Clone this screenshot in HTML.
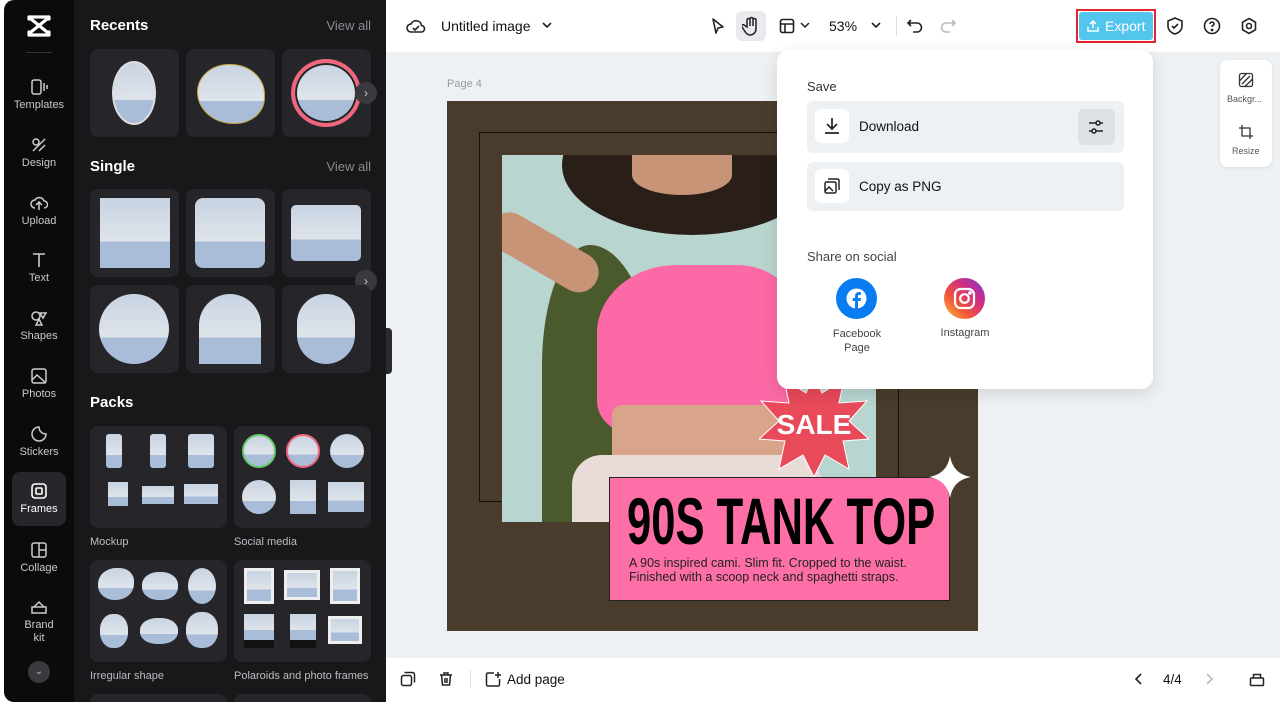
<!DOCTYPE html>
<html><head><meta charset="utf-8"><style>
*{box-sizing:border-box;margin:0;padding:0}
body{width:1280px;height:706px;overflow:hidden;background:#fff;font-family:"Liberation Sans",sans-serif;position:relative}
.abs{position:absolute}
.side{left:4px;top:0;width:70px;height:702px;background:#0b0b0c;border-radius:10px 0 0 10px}
.nav{position:absolute;left:0;width:70px;text-align:center;color:#c9c9cc;font-size:11px}
.nav svg{display:block;margin:0 auto 3px}
.panel{left:74px;top:0;width:312px;height:702px;background:#18181a;overflow:hidden}
.h{position:absolute;color:#fff;font-weight:bold;font-size:15px}
.va{position:absolute;right:15px;color:#8c8c90;font-size:13px}
.card{position:absolute;background:#26262a;border-radius:8px;overflow:hidden}
.sky{position:absolute;background:linear-gradient(#c8d3e2 0,#dfe4ea 62%,#a9bcd8 62%);}
.lbl{position:absolute;color:#bdbdc1;font-size:11px}
.arrow{position:absolute;width:22px;height:22px;border-radius:50%;background:#3a3a3e;color:#ccc;font-size:12px;text-align:center;line-height:22px}
.top{left:386px;top:0;width:894px;height:52px;background:#fff}
.canvas{left:386px;top:52px;width:894px;height:606px;background:#eef1f4}
.bottom{left:386px;top:658px;width:894px;height:44px;background:#fff}
.pop{left:777px;top:50px;width:376px;height:339px;background:#fff;border-radius:12px;box-shadow:0 4px 16px rgba(0,0,0,.12)}
.row{position:absolute;left:30px;width:317px;background:#eef1f4;border-radius:6px}
.ic{position:absolute;left:8px;top:8px;width:34px;height:34px;background:#fff;border-radius:6px}
</style></head><body>
<div class="abs side">
 <svg class="abs" style="left:22px;top:14px" width="26" height="24" viewBox="0 0 26 24" fill="none" stroke="#fff" stroke-width="3.2" stroke-linecap="round" stroke-linejoin="round"><path d="M3 3h20M3 21h20M5 5l16 13M21 5L5 18M3 3v2M3 21v-3M23 3v2M23 21v-3"/></svg>
 <div class="abs" style="left:22px;top:52px;width:26px;height:1px;background:#333"></div>
 <div class="nav" style="top:78px"><svg width="18" height="18" viewBox="0 0 18 18" fill="none" stroke="#ccc" stroke-width="1.5"><rect x="2" y="2" width="9" height="14" rx="2"/><path d="M14 5v8M17 7v4"/></svg>Templates</div>
 <div class="nav" style="top:136px"><svg width="18" height="18" viewBox="0 0 18 18" fill="none" stroke="#ccc" stroke-width="1.5"><circle cx="6" cy="6" r="3"/><path d="M3 15l12-12M9 15l6-6"/></svg>Design</div>
 <div class="nav" style="top:194px"><svg width="18" height="18" viewBox="0 0 18 18" fill="none" stroke="#ccc" stroke-width="1.5"><path d="M5 14a4 4 0 010-8 5 5 0 019 1 3.5 3.5 0 010 7M9 16V9M6 11l3-3 3 3"/></svg>Upload</div>
 <div class="nav" style="top:251px"><svg width="18" height="18" viewBox="0 0 18 18" fill="none" stroke="#ccc" stroke-width="1.6"><path d="M3 3h12M9 3v13"/></svg>Text</div>
 <div class="nav" style="top:309px"><svg width="18" height="18" viewBox="0 0 18 18" fill="none" stroke="#ccc" stroke-width="1.5"><circle cx="6" cy="7" r="4"/><path d="M10 4l6 0-3 5zM6 16l3-6 3 6z"/></svg>Shapes</div>
 <div class="nav" style="top:367px"><svg width="18" height="18" viewBox="0 0 18 18" fill="none" stroke="#ccc" stroke-width="1.5"><rect x="2" y="2" width="14" height="14" rx="2"/><path d="M2 13l5-5 9 8"/></svg>Photos</div>
 <div class="nav" style="top:425px"><svg width="18" height="18" viewBox="0 0 18 18" fill="none" stroke="#ccc" stroke-width="1.5"><path d="M16 9A7 7 0 119 2c0 4 3 7 7 7z"/></svg>Stickers</div>
 <div class="abs" style="left:8px;top:472px;width:54px;height:54px;background:#26262b;border-radius:8px"></div>
 <div class="nav" style="top:482px;color:#fff"><svg width="18" height="18" viewBox="0 0 18 18" fill="none" stroke="#fff" stroke-width="1.6"><rect x="2" y="2" width="14" height="14" rx="3"/><rect x="6" y="6" width="6" height="6" rx="1"/></svg>Frames</div>
 <div class="nav" style="top:541px"><svg width="18" height="18" viewBox="0 0 18 18" fill="none" stroke="#ccc" stroke-width="1.5"><rect x="2" y="2" width="14" height="14" rx="2"/><path d="M9 2v14M9 9h7"/></svg>Collage</div>
 <div class="nav" style="top:598px;line-height:13px"><svg width="18" height="18" viewBox="0 0 18 18" fill="none" stroke="#ccc" stroke-width="1.5"><path d="M2 9h14v6H2zM4 9l5-5 5 5"/></svg>Brand<br>kit</div>
 <div class="abs" style="left:24px;top:661px;width:22px;height:22px;border-radius:50%;background:#3a3a3e;color:#bbb;font-size:10px;text-align:center;line-height:22px">⌄</div>
</div>
<div class="abs panel">
 <div class="h" style="left:16px;top:17px">Recents</div><div class="va" style="top:18px">View all</div>
 <div class="card" style="left:16px;top:49px;width:89px;height:88px"><div class="sky" style="left:22px;top:12px;width:44px;height:64px;border-radius:50%;border:2px solid #ddd"></div></div>
 <div class="card" style="left:112px;top:49px;width:89px;height:88px"><div class="sky" style="left:11px;top:15px;width:68px;height:60px;border-radius:48% 52% 45% 55%;border:1px solid #c9a63a"></div></div>
 <div class="card" style="left:208px;top:49px;width:89px;height:88px"><div class="sky" style="left:9px;top:10px;width:70px;height:68px;border-radius:50%;border:4px solid #f0667e;box-shadow:inset 0 0 0 2px #222"></div></div>
 <div class="arrow" style="left:281px;top:82px">›</div>
 <div class="h" style="left:16px;top:158px">Single</div><div class="va" style="top:159px">View all</div>
 <div class="card" style="left:16px;top:189px;width:89px;height:88px"><div class="sky" style="left:10px;top:9px;width:70px;height:70px"></div></div>
 <div class="card" style="left:112px;top:189px;width:89px;height:88px"><div class="sky" style="left:9px;top:9px;width:70px;height:70px;border-radius:8px"></div></div>
 <div class="card" style="left:208px;top:189px;width:89px;height:88px"><div class="sky" style="left:9px;top:16px;width:70px;height:56px;border-radius:5px"></div></div>
 <div class="arrow" style="left:281px;top:270px">›</div>
 <div class="card" style="left:16px;top:285px;width:89px;height:88px"><div class="sky" style="left:9px;top:9px;width:70px;height:70px;border-radius:50%"></div></div>
 <div class="card" style="left:112px;top:285px;width:89px;height:88px"><div class="sky" style="left:13px;top:9px;width:62px;height:70px;border-radius:31px 31px 0 0"></div></div>
 <div class="card" style="left:208px;top:285px;width:89px;height:88px"><div class="sky" style="left:15px;top:9px;width:58px;height:70px;border-radius:29px"></div></div>
 <div class="h" style="left:16px;top:394px">Packs</div>
 <div class="card" style="left:16px;top:426px;width:137px;height:102px">
  <div class="sky" style="left:16px;top:8px;width:16px;height:34px;border-radius:3px"></div><div class="sky" style="left:60px;top:8px;width:16px;height:34px;border-radius:3px"></div><div class="sky" style="left:98px;top:8px;width:26px;height:34px;border-radius:3px"></div>
  <div class="sky" style="left:18px;top:56px;width:20px;height:24px"></div><div class="sky" style="left:52px;top:60px;width:32px;height:18px"></div><div class="sky" style="left:94px;top:58px;width:34px;height:20px"></div></div>
 <div class="card" style="left:160px;top:426px;width:137px;height:102px">
  <div class="sky" style="left:8px;top:8px;width:34px;height:34px;border-radius:50%;border:2px solid #6c6"></div><div class="sky" style="left:52px;top:8px;width:34px;height:34px;border-radius:50%;border:2px solid #f0667e"></div><div class="sky" style="left:96px;top:8px;width:34px;height:34px;border-radius:50%"></div>
  <div class="sky" style="left:8px;top:54px;width:34px;height:34px;border-radius:50%"></div><div class="sky" style="left:56px;top:54px;width:26px;height:34px"></div><div class="sky" style="left:94px;top:56px;width:36px;height:30px"></div></div>
 <div class="lbl" style="left:16px;top:536px">Mockup</div><div class="lbl" style="left:160px;top:536px">Social media</div>
 <div class="card" style="left:16px;top:560px;width:137px;height:102px">
  <div class="sky" style="left:8px;top:8px;width:36px;height:32px;border-radius:50% 40% 50% 45%"></div><div class="sky" style="left:52px;top:12px;width:36px;height:28px;border-radius:45%"></div><div class="sky" style="left:98px;top:8px;width:28px;height:36px;border-radius:50%"></div>
  <div class="sky" style="left:10px;top:54px;width:28px;height:34px;border-radius:45%"></div><div class="sky" style="left:50px;top:58px;width:38px;height:26px;border-radius:45%"></div><div class="sky" style="left:96px;top:52px;width:32px;height:36px;border-radius:45%"></div></div>
 <div class="card" style="left:160px;top:560px;width:137px;height:102px">
  <div class="sky" style="left:10px;top:8px;width:30px;height:36px;border:3px solid #eee"></div><div class="sky" style="left:50px;top:10px;width:36px;height:30px;border:3px solid #eee"></div><div class="sky" style="left:96px;top:8px;width:30px;height:36px;border:3px solid #eee"></div>
  <div class="sky" style="left:10px;top:54px;width:30px;height:34px;border-bottom:8px solid #111"></div><div class="sky" style="left:56px;top:54px;width:26px;height:34px;border-bottom:8px solid #111"></div><div class="sky" style="left:94px;top:56px;width:34px;height:28px;border:3px solid #eee"></div></div>
 <div class="lbl" style="left:16px;top:670px">Irregular shape</div><div class="lbl" style="left:160px;top:670px">Polaroids and photo frames</div>
 <div class="card" style="left:16px;top:694px;width:137px;height:20px"></div><div class="card" style="left:160px;top:694px;width:137px;height:20px"></div>
</div>
<div class="abs" style="left:386px;top:328px;width:6px;height:46px;background:#2a2a2d;border-radius:0 4px 4px 0;z-index:2"></div>
<div class="abs top">
 <svg class="abs" style="left:20px;top:17px" width="20" height="18" viewBox="0 0 20 18" fill="none" stroke="#222" stroke-width="1.6"><path d="M5 15a4 4 0 010-8 5.5 5.5 0 0110.5 1.5A3.2 3.2 0 0115 15z"/><path d="M7 11l2 2 4-4"/></svg>
 <div class="abs" style="left:55px;top:18px;font-size:14px;color:#111">Untitled image</div>
 <svg class="abs" style="left:155px;top:20px" width="12" height="10" viewBox="0 0 12 10"><path d="M2 3l4 4 4-4" fill="none" stroke="#222" stroke-width="1.6"/></svg>
 <svg class="abs" style="left:324px;top:17px" width="16" height="18" viewBox="0 0 16 18"><path d="M3 2l10 8-5 1-2 5z" fill="none" stroke="#222" stroke-width="1.6" stroke-linejoin="round"/></svg>
 <div class="abs" style="left:350px;top:11px;width:30px;height:30px;background:#e8eaed;border-radius:6px"></div>
 <svg class="abs" style="left:356px;top:16px" width="18" height="20" viewBox="0 0 18 20" fill="none" stroke="#222" stroke-width="1.5"><path d="M5 11V4a1.5 1.5 0 013 0v6V3a1.5 1.5 0 013 0v7V4a1.5 1.5 0 013 0v9a6 6 0 01-6 6c-3 0-4-2-6-5l-2-3a1.4 1.4 0 012-2z"/></svg>
 <svg class="abs" style="left:393px;top:18px" width="16" height="16" viewBox="0 0 16 16" fill="none" stroke="#222" stroke-width="1.6"><rect x="1.5" y="1.5" width="13" height="13" rx="2"/><path d="M1.5 6h13M6 6v8.5"/></svg>
 <svg class="abs" style="left:414px;top:21px" width="10" height="8" viewBox="0 0 10 8"><path d="M1 2l4 4 4-4" fill="none" stroke="#222" stroke-width="1.5"/></svg>
 <div class="abs" style="left:443px;top:18px;font-size:14px;color:#111">53%</div>
 <svg class="abs" style="left:484px;top:21px" width="12" height="9" viewBox="0 0 12 9"><path d="M2 2l4 4 4-4" fill="none" stroke="#222" stroke-width="1.6"/></svg>
 <div class="abs" style="left:510px;top:16px;width:1px;height:20px;background:#ddd"></div>
 <svg class="abs" style="left:520px;top:17px" width="18" height="18" viewBox="0 0 18 18" fill="none" stroke="#222" stroke-width="1.6"><path d="M5 3L2 6l3 3M2 6h9a4.5 4.5 0 010 9H7"/></svg>
 <svg class="abs" style="left:553px;top:17px" width="18" height="18" viewBox="0 0 18 18" fill="none" stroke="#bbb" stroke-width="1.6"><path d="M13 3l3 3-3 3M16 6H7a4.5 4.5 0 000 9h4"/></svg>
 <div class="abs" style="left:690px;top:9px;width:80px;height:34px;border:2px solid #e3232f"></div>
 <div class="abs" style="left:693px;top:12px;width:74px;height:28px;background:#52c6ed;border-radius:3px;color:#fff;font-size:14px;line-height:28px;padding-left:26px">Export</div>
 <svg class="abs" style="left:700px;top:19px" width="14" height="14" viewBox="0 0 14 14" fill="none" stroke="#fff" stroke-width="1.5"><path d="M7 9V2M4 5l3-3 3 3M2 8v4h10V8"/></svg>
 <svg class="abs" style="left:780px;top:16px" width="18" height="20" viewBox="0 0 18 20" fill="none" stroke="#222" stroke-width="1.6"><path d="M9 2l7 3v5c0 4-3 7-7 8-4-1-7-4-7-8V5z"/><path d="M6 10l2 2 4-4"/></svg>
 <svg class="abs" style="left:817px;top:17px" width="18" height="18" viewBox="0 0 18 18" fill="none" stroke="#222" stroke-width="1.6"><circle cx="9" cy="9" r="7.5"/><path d="M7 7a2 2 0 114 0c0 1.5-2 1.5-2 3"/><circle cx="9" cy="13" r=".6" fill="#222"/></svg>
 <svg class="abs" style="left:854px;top:17px" width="18" height="18" viewBox="0 0 18 18" fill="none" stroke="#222" stroke-width="1.6"><path d="M9 1.5l6.5 3.75v7.5L9 16.5l-6.5-3.75v-7.5z"/><circle cx="9" cy="9" r="2.5"/></svg>
</div>
<div class="abs canvas">
 <div class="abs" style="left:61px;top:26px;font-size:11px;color:#999">Page 4</div>
 <div class="abs" style="left:834px;top:8px;width:52px;height:107px;background:#fff;border-radius:8px;box-shadow:0 1px 4px rgba(0,0,0,.08)">
  <svg class="abs" style="left:18px;top:12px" width="16" height="16" viewBox="0 0 16 16" fill="none" stroke="#333" stroke-width="1.3"><rect x="1.5" y="1.5" width="13" height="13" rx="2"/><path d="M4 12l8-8M1.5 9l7-7.5M7 14.5L14.5 7"/></svg>
  <div class="abs" style="left:7px;top:34px;font-size:9px;color:#555">Backgr...</div>
  <svg class="abs" style="left:18px;top:64px" width="16" height="16" viewBox="0 0 16 16" fill="none" stroke="#333" stroke-width="1.3"><path d="M4 1v11h11M1 4h11v11"/></svg>
  <div class="abs" style="left:12px;top:86px;font-size:9px;color:#555">Resize</div>
 </div>
</div>
<div class="abs" style="left:447px;top:101px;width:531px;height:530px;background:#4a3c2c;overflow:hidden">
 <div class="abs" style="left:32px;top:31px;width:420px;height:370px;border:1.5px solid #111"></div>
 <div class="abs" style="left:55px;top:54px;width:374px;height:367px;overflow:hidden;background:#b8d5cf">
  <div class="abs" style="left:40px;top:90px;width:120px;height:300px;background:#4b5a2c;border-radius:40% 60% 0 0"></div>
  <div class="abs" style="left:60px;top:-60px;width:260px;height:140px;background:#2a1e18;border-radius:50%"></div>
  <div class="abs" style="left:130px;top:0;width:100px;height:40px;background:#c89478;border-radius:0 0 50% 50%"></div>
  <div class="abs" style="left:0;top:50px;width:120px;height:40px;background:#c89478;transform:rotate(30deg);transform-origin:0 0;border-radius:20px"></div>
  <div class="abs" style="left:95px;top:110px;width:200px;height:170px;background:#fb6aa6;border-radius:40% 30% 20% 20%"></div>
  <div class="abs" style="left:110px;top:250px;width:180px;height:80px;background:#d9a58a;border-radius:10px 10px 0 0"></div>
  <div class="abs" style="left:70px;top:300px;width:250px;height:80px;background:#e9dcd8;border-radius:30px 30px 0 0"></div>
 </div>
 <svg class="abs" style="left:312px;top:272px" width="110" height="104" viewBox="0 0 110 104"><polygon points="55,0 63,20 85,6 80,30 108,28 90,48 110,66 84,68 90,96 66,82 55,104 44,82 20,96 26,68 0,66 20,48 2,28 30,30 25,6 47,20" fill="#e84a5a" stroke="#fff" stroke-width="1"/><text x="55" y="61" text-anchor="middle" font-family="Liberation Sans" font-weight="bold" font-size="28" fill="#fff">SALE</text></svg>
 <div class="abs" style="left:162px;top:376px;width:341px;height:124px;background:#fd6fa6;border:1.5px solid #222;border-radius:0 20px 0 0"></div>
 <div class="abs" style="left:180px;top:382px;white-space:nowrap;font-weight:bold;font-size:66px;transform:scaleX(.66);transform-origin:0 0;color:#000;line-height:76px">90S TANK TOP</div>
 <div class="abs" style="left:182px;top:455px;font-size:12.5px;color:#222;line-height:14px;white-space:nowrap">A 90s inspired cami. Slim fit. Cropped to the waist.<br>Finished with a scoop neck and spaghetti straps.</div>
 <svg class="abs" style="left:482px;top:355px" width="42" height="42" viewBox="0 0 42 42"><path d="M21 0Q24 18 42 21Q24 24 21 42Q18 24 0 21Q18 18 21 0z" fill="#fff"/></svg>
</div>
<div class="abs pop">
 <div class="abs" style="left:30px;top:29px;font-size:13px;color:#333">Save</div>
 <div class="row" style="top:51px;height:52px"><div class="ic"><svg style="margin:7px" width="20" height="20" viewBox="0 0 20 20" fill="none" stroke="#222" stroke-width="1.7"><path d="M10 2v11M5 8l5 5 5-5M3 17h14"/></svg></div>
  <div class="abs" style="left:52px;top:18px;font-size:13.5px;color:#111">Download</div>
  <div class="abs" style="left:271px;top:8px;width:37px;height:36px;background:#dde1e6;border-radius:6px"><svg style="margin:9px" width="18" height="18" viewBox="0 0 18 18" fill="none" stroke="#222" stroke-width="1.5"><path d="M2 5h14M2 13h14"/><circle cx="11" cy="5" r="2" fill="#dde1e6"/><circle cx="7" cy="13" r="2" fill="#dde1e6"/></svg></div></div>
 <div class="row" style="top:112px;height:49px"><div class="ic" style="top:7px"><svg style="margin:8px" width="18" height="18" viewBox="0 0 18 18" fill="none" stroke="#222" stroke-width="1.5"><rect x="2" y="5" width="11" height="11" rx="1.5"/><path d="M5 2h9.5a1.5 1.5 0 011.5 1.5V13M2 14l4-4 4 4"/></svg></div>
  <div class="abs" style="left:52px;top:17px;font-size:13.5px;color:#111">Copy as PNG</div></div>
 <div class="abs" style="left:30px;top:199px;font-size:13px;color:#444">Share on social</div>
 <div class="abs" style="left:59px;top:228px;width:41px;height:41px;border-radius:50%;background:#0a7cf2"><svg style="margin:10px" width="21" height="21" viewBox="0 0 21 21"><circle cx="10.5" cy="10.5" r="10" fill="#fff"/><path d="M12 21v-8h2.6l.4-3H12V8.3c0-.9.3-1.5 1.5-1.5H15V4.2c-.3 0-1.2-.1-2.2-.1-2.2 0-3.7 1.3-3.7 3.8V10H6.7v3h2.4v8z" fill="#0a7cf2"/></svg></div>
 <div class="abs" style="left:40px;top:277px;width:80px;text-align:center;font-size:11px;color:#444;line-height:14px">Facebook<br>Page</div>
 <div class="abs" style="left:167px;top:228px;width:41px;height:41px;border-radius:50%;background:linear-gradient(45deg,#f9c33b,#f2533a 35%,#d12d83 65%,#7a3ad6)"><svg style="margin:9px" width="23" height="23" viewBox="0 0 23 23" fill="none" stroke="#fff" stroke-width="2.2"><rect x="2" y="2" width="19" height="19" rx="5.5"/><circle cx="11.5" cy="11.5" r="4.3"/><circle cx="17" cy="6" r=".8" fill="#fff"/></svg></div>
 <div class="abs" style="left:148px;top:277px;width:80px;text-align:center;font-size:11px;color:#444">Instagram</div>
</div>
<div class="abs bottom">
 <svg class="abs" style="left:14px;top:13px" width="16" height="16" viewBox="0 0 16 16" fill="none" stroke="#222" stroke-width="1.5"><rect x="1.5" y="4.5" width="10" height="10" rx="2"/><path d="M4.5 1.5h8a2 2 0 012 2v8"/></svg>
 <svg class="abs" style="left:52px;top:13px" width="16" height="16" viewBox="0 0 16 16" fill="none" stroke="#222" stroke-width="1.5"><path d="M2 4h12M6 4V2h4v2M3.5 4l1 10h7l1-10M7 7v5M9 7v5"/></svg>
 <div class="abs" style="left:84px;top:12px;width:1px;height:18px;background:#ddd"></div>
 <svg class="abs" style="left:99px;top:13px" width="17" height="17" viewBox="0 0 17 17" fill="none" stroke="#222" stroke-width="1.5"><path d="M9 2H3a1.5 1.5 0 00-1.5 1.5v10A1.5 1.5 0 003 15h10a1.5 1.5 0 001.5-1.5V8M13 1v6M10 4h6"/></svg>
 <div class="abs" style="left:121px;top:14px;font-size:13.5px;color:#111">Add page</div>
 <svg class="abs" style="left:748px;top:14px" width="10" height="14" viewBox="0 0 10 14"><path d="M7 2L2 7l5 5" fill="none" stroke="#222" stroke-width="1.6"/></svg>
 <div class="abs" style="left:777px;top:14px;font-size:13.5px;color:#111">4/4</div>
 <svg class="abs" style="left:818px;top:14px" width="10" height="14" viewBox="0 0 10 14"><path d="M3 2l5 5-5 5" fill="none" stroke="#bbb" stroke-width="1.6"/></svg>
 <svg class="abs" style="left:863px;top:13px" width="16" height="16" viewBox="0 0 16 16" fill="none" stroke="#222" stroke-width="1.5"><rect x="1.5" y="7" width="13" height="7.5" rx="1"/><path d="M4.5 7V3.5h7V7"/></svg>
</div>
</body></html>
